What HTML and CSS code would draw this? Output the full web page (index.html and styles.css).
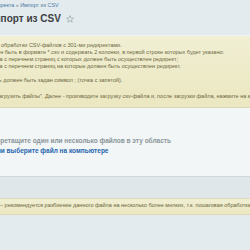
FILE: index.html
```html
<!DOCTYPE html>
<html lang="ru">

<head>
	<meta charset="UTF-8" />
	<meta name="viewport" content="width=device-width, initial-scale=1.0" />
	<title>Импорт из CSV</title>
	<link rel="stylesheet" href="styles.css">
</head>

<body>
	<div class="head">
		<div class="crumbs">
			<a href="#">Редиректа</a> <span class="sep">»</span> <a href="#">Импорт из CSV</a>
		</div>
		<h1 class="title">
			Импорт из CSV
			<svg class="star" viewBox="0 0 10 10" width="8" height="8">
				<path d="M5 0.8 L6.2 3.7 L9.3 3.9 L6.9 5.9 L7.7 9 L5 7.3 L2.3 9 L3.1 5.9 L0.7 3.9 L3.8 3.7 Z" fill="none" stroke="currentColor" stroke-width="0.9" stroke-linejoin="round" />
			</svg>
		</h1>
	</div>

	<!-- описание -->
	<div class="notice">
		<div class="notice-text">
			<p>Модуль для обработки CSV-файлов с 301-ми редиректами.</p>
			<p>Файл должен быть в формате *.csv и содержать 2 колонки, в первой строке которых будет указано:</p>
			<p>- 1-я таблица с перечнем страниц с которых должен быть осуществлен редирект;</p>
			<p>- 2-я таблица с перечнем страниц на которые должен быть осуществлен редирект.</p>
			<p>&nbsp;</p>
			<p>Разделитель должен быть задан символ ; (точка с запятой).</p>
			<p class="gap">Нажмите "Загрузить файлы". Далее - производите загрузку csv-файла и, после загрузки файла, нажмите на кнопку "Импорт".</p>
		</div>
	</div>

	<!-- загрузка -->
	<div class="drop">
		<div class="drop-text">
			<div class="drop-hint">Перетащите один или несколько файлов в эту область</div>
			<a href="#" class="drop-link">Или выберите файл на компьютере</a>
		</div>
	</div>

	<div class="bar"></div>

	<div class="notice notice-small">
		<div class="notice-text">
			<p>Файл велик – рекомендуется разбиение данного файла на несколько более мелких, т.к. пошаговая обработка не предусмотрена.</p>
		</div>
	</div>
</body>

</html>
```

FILE: styles.css
```css
body {
	margin: 0;
	width: 250px;
	height: 250px;
	overflow: hidden;
	background: #e3ebee;
	font-family: "Liberation Sans", Arial, sans-serif;
}

.head {
	padding: 2px 0 10px;
	border-bottom: 1px solid #f1f5f6;
}

.crumbs {
	margin-left: -12px;
	font-size: 5.4px;
	line-height: 7px;
	white-space: nowrap;
}

.crumbs a {
	color: #4d77a3;
	text-decoration: none;
}

.crumbs .sep {
	color: #7a8a92;
}

.title {
	display: flex;
	align-items: center;
	gap: 5px;
	margin: 4px 0 0 -14px;
	font-size: 10px;
	font-weight: bold;
	line-height: 12px;
	color: #3b4043;
	white-space: nowrap;
}

.star {
	color: #9ba7ac;
}

.notice {
	padding: 6px 0 7px;
	background: linear-gradient(#f1efd4, #ebe7c0);
	border-bottom: 1px solid #dbd8b4;
}

.notice-text {
	margin-left: -31px;
	font-size: 5.5px;
	line-height: 7px;
	color: #6c6741;
	white-space: nowrap;
}

.notice-text p {
	margin: 0;
}

.notice-text .gap {
	margin-top: 9px;
}

.drop {
	padding: 28px 0 20px;
	background: #f3f6f7;
}

.drop-text {
	margin-left: -8px;
	font-size: 6.5px;
	font-weight: bold;
	line-height: 10px;
	white-space: nowrap;
}

.drop-hint {
	color: #8a959a;
}

.drop-link {
	color: #2565ad;
	text-decoration: none;
}

.bar {
	height: 21px;
	background: #dfe7ea;
	border-top: 1px solid #cfd9dc;
}

.notice-small {
	padding: 3px 0 5px;
	border-top: 1px solid #dedbb8;
}
```
